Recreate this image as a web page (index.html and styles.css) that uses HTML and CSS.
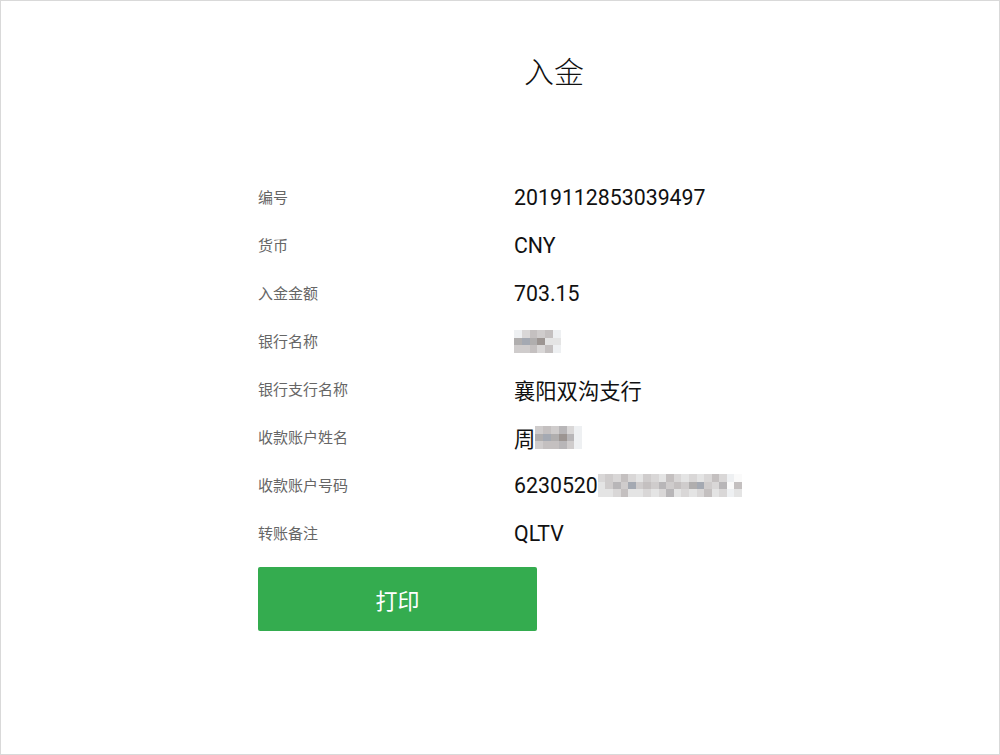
FILE: index.html
```
<!DOCTYPE html>
<html lang="zh-CN">
<head>
<meta charset="utf-8">
<title>入金</title>
<link rel="stylesheet" href="styles.css">
</head>
<body>
<div class="frame">
  <div class="panel">
    <h1 class="title">入金</h1>
    <div class="rows">
      <div class="row"><span class="label">编号</span><span class="value">2019112853039497</span></div>
      <div class="row"><span class="label">货币</span><span class="value">CNY</span></div>
      <div class="row"><span class="label">入金金额</span><span class="value">703.15</span></div>
      <div class="row"><span class="label">银行名称</span><span class="value">
        <span class="mosaic cols6">
          <i class="c1"></i><i class="c3"></i><i class="c5"></i><i class="c4"></i><i class="c5"></i><i class="c1"></i>
          <i class="c7"></i><i class="c8"></i><i class="c7"></i><i class="c9"></i><i class="c2"></i><i class="c2"></i>
          <i class="c4"></i><i class="c4"></i><i class="c5"></i><i class="c3"></i><i class="c5"></i><i class="c1"></i>
        </span></span></div>
      <div class="row"><span class="label">银行支行名称</span><span class="value">襄阳双沟支行</span></div>
      <div class="row"><span class="label">收款账户姓名</span><span class="value">周<span class="mosaic cols6">
          <i class="c4"></i><i class="c5"></i><i class="c4"></i><i class="c6"></i><i class="c3"></i><i class="c1"></i>
          <i class="c7"></i><i class="c8"></i><i class="c7"></i><i class="c9"></i><i class="c6"></i><i class="c1"></i>
          <i class="c4"></i><i class="c5"></i><i class="c5"></i><i class="c6"></i><i class="c4"></i><i class="c1"></i>
        </span></span></div>
      <div class="row"><span class="label">收款账户号码</span><span class="value">6230520<span class="mosaic cols19">
          <i class="c3"></i><i class="c4"></i><i class="c3"></i><i class="c5"></i><i class="c3"></i><i class="c2"></i><i class="c4"></i><i class="c3"></i><i class="c2"></i><i class="c5"></i><i class="c3"></i><i class="c2"></i><i class="c3"></i><i class="c2"></i><i class="c3"></i><i class="c5"></i><i class="c3"></i><i class="c1"></i><i class="c0"></i>
          <i class="c2"></i><i class="c4"></i><i class="c6"></i><i class="c4"></i><i class="c8"></i><i class="c4"></i><i class="c5"></i><i class="c4"></i><i class="c6"></i><i class="c4"></i><i class="c5"></i><i class="c4"></i><i class="c7"></i><i class="c8"></i><i class="c4"></i><i class="c3"></i><i class="c6"></i><i class="c0"></i><i class="c5"></i>
          <i class="c2"></i><i class="c2"></i><i class="c3"></i><i class="c5"></i><i class="c2"></i><i class="c2"></i><i class="c3"></i><i class="c2"></i><i class="c3"></i><i class="c6"></i><i class="c2"></i><i class="c3"></i><i class="c2"></i><i class="c3"></i><i class="c5"></i><i class="c2"></i><i class="c3"></i><i class="c1"></i><i class="c2"></i>
        </span></span></div>
      <div class="row"><span class="label">转账备注</span><span class="value">QLTV</span></div>
    </div>
    <button class="print" type="button">打印</button>
  </div>
</div>
</body>
</html>
```

FILE: styles.css
```
* { box-sizing: border-box; }
html, body {
  margin: 0;
  padding: 0;
  background: #fff;
}
body {
  font-family: Roboto, "Noto Sans CJK SC", sans-serif;
  color: #111;
}
.frame {
  width: 1000px;
  height: 755px;
  border: 1px solid #d9d9d9;
  overflow: hidden;
}
.panel {
  margin-left: 257px;
  width: 592px;
}
.title {
  margin: 49px 0 0;
  height: 40px;
  line-height: 40px;
  font-size: 30px;
  font-weight: 300;
  text-align: center;
  color: #111;
  font-family: "Noto Sans CJK SC", sans-serif;
}
.rows {
  margin-top: 83px;
  display: flex;
  flex-direction: column;
}
.row {
  display: flex;
  align-items: center;
  height: 48px;
}
.label {
  width: 256px;
  flex: none;
  padding-bottom: 2px;
  font-family: "Noto Sans CJK SC", sans-serif;
  font-size: 15px;
  color: #666;
}
.value {
  display: flex;
  align-items: center;
  font-size: 21.3px;
  color: #111;
}
.mosaic {
  display: grid;
  grid-auto-rows: 7.7px;
  margin-top: 1px;
}
.mosaic.cols6 { grid-template-columns: repeat(6, 7.8px); }
.mosaic.cols19 { grid-template-columns: repeat(19, 7.6px); }
.mosaic i { display: block; }
.c0 { background: #fafafa; }
.c1 { background: #eef0f2; }
.c2 { background: #e4e4e4; }
.c3 { background: #d9d7d7; }
.c4 { background: #cfcccc; }
.c5 { background: #c4c0c0; }
.c6 { background: #b8b6b8; }
.c7 { background: #b0aeae; }
.c8 { background: #a4a9b2; }
.c9 { background: #9c9592; }
.print {
  display: block;
  margin-top: 10px;
  width: 279px;
  height: 64px;
  border: none;
  border-radius: 2px;
  background: #34ac4f;
  color: #fff;
  font-family: "Noto Sans CJK SC", sans-serif;
  font-size: 22px;
  padding: 0;
  cursor: pointer;
}
```
